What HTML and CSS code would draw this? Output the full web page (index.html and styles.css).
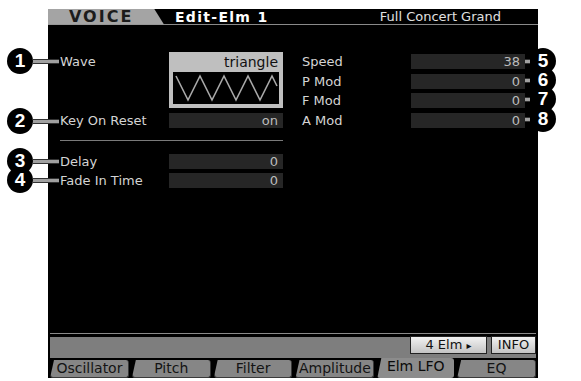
FILE: index.html
```html
<!DOCTYPE html>
<html lang="en">

<head>
    <meta charset="UTF-8">
    <meta name="viewport" content="width=device-width, initial-scale=1.0">
    <title>Voice Edit - Elm LFO</title>

    <link rel="stylesheet" href="styles.css">
</head>

<body>

    <div class="page">

        <!-- LCD screen -->
        <div class="screen">

            <!-- Title bar -->
            <div class="header">
                <div class="mode">VOICE</div>
                <div class="title">Edit-Elm 1</div>
                <div class="voice-name">Full Concert Grand</div>
            </div>

            <!-- Parameters -->
            <div class="content">
                <div class="col col-left">
                    <div class="row row-wave">
                        <span class="label">Wave</span>
                        <div class="wave-box">
                            <div class="wave-name">triangle</div>
                            <div class="wave-graph">
                                <svg viewBox="0 0 106 32" width="106" height="32">
                                    <polyline points="3,4 15,28 27,4 39,28 51,4 63,28 75,4 87,28 99,4 104,14"
                                        fill="none" stroke="#a8a8a8" stroke-width="1.6" />
                                </svg>
                            </div>
                        </div>
                    </div>
                    <div class="row row-key">
                        <span class="label">Key On Reset</span>
                        <div class="value">on</div>
                    </div>
                    <div class="sep"></div>
                    <div class="row row-delay">
                        <span class="label">Delay</span>
                        <div class="value">0</div>
                    </div>
                    <div class="row">
                        <span class="label">Fade In Time</span>
                        <div class="value">0</div>
                    </div>
                </div>

                <div class="col col-right">
                    <div class="row">
                        <span class="label">Speed</span>
                        <div class="value">38</div>
                    </div>
                    <div class="row">
                        <span class="label">P Mod</span>
                        <div class="value">0</div>
                    </div>
                    <div class="row">
                        <span class="label">F Mod</span>
                        <div class="value">0</div>
                    </div>
                    <div class="row">
                        <span class="label">A Mod</span>
                        <div class="value">0</div>
                    </div>
                </div>
            </div>

            <!-- Function buttons and tabs -->
            <div class="footer">
                <div class="band">
                    <div class="btn btn-elm">4 Elm <span class="arrow">&#9656;</span></div>
                    <div class="btn btn-info">INFO</div>
                </div>
                <div class="tabs">
                    <div class="tab">Oscillator</div>
                    <div class="tab">Pitch</div>
                    <div class="tab">Filter</div>
                    <div class="tab">Amplitude</div>
                    <div class="tab active">Elm LFO</div>
                    <div class="tab">EQ</div>
                </div>
            </div>
        </div>

        <!-- Numbered callouts -->
        <div class="callout left" style="top: 48px;"><span class="num">1</span><span class="lead"></span></div>
        <div class="callout left" style="top: 108px;"><span class="num">2</span><span class="lead"></span></div>
        <div class="callout left" style="top: 148px;"><span class="num">3</span><span class="lead"></span></div>
        <div class="callout left" style="top: 167px;"><span class="num">4</span><span class="lead"></span></div>
        <div class="callout right" style="top: 48px;"><span class="lead"></span><span class="num">5</span></div>
        <div class="callout right" style="top: 67px;"><span class="lead"></span><span class="num">6</span></div>
        <div class="callout right" style="top: 86px;"><span class="lead"></span><span class="num">7</span></div>
        <div class="callout right" style="top: 106px;"><span class="lead"></span><span class="num">8</span></div>
    </div>

</body>

</html>
```

FILE: styles.css
```css
* {
    margin: 0;
    padding: 0;
    box-sizing: border-box;
}

body {
    background-color: #ffffff;
    font-family: "DejaVu Sans", sans-serif;
}

.page {
    position: relative;
    width: 581px;
    height: 381px;
    padding: 9px 0 0 48px;
}

/* Screen */
.screen {
    width: 490px;
    height: 369px;
    background-color: #000;
    display: flex;
    flex-direction: column;
}

/* Title bar */
.header {
    height: 16px;
    display: flex;
    align-items: center;
    border-bottom: 1px solid #8a8a8a;
}

.mode {
    width: 116px;
    height: 16px;
    background-color: #a4a4a4;
    color: #1c1c1c;
    font-family: "DejaVu Sans", sans-serif;
    font-weight: bold;
    font-size: 16px;
    line-height: 16px;
    letter-spacing: 2px;
    padding-left: 21px;
    clip-path: polygon(0 0, 106px 0, 116px 100%, 0 100%);
}

.title {
    color: #fff;
    font-weight: bold;
    font-size: 14px;
    letter-spacing: 1.3px;
    margin-left: 11px;
}

.voice-name {
    color: #e0e0e0;
    font-size: 13px;
    margin-left: auto;
    margin-right: 37px;
}

/* Parameters */
.content {
    flex: 1;
    display: flex;
    color: #d4d4d4;
    font-size: 13px;
}

.col {
    display: flex;
    flex-direction: column;
}

.col-left {
    width: 223px;
    margin-left: 12px;
    padding-top: 27px;
}

.col-right {
    width: 223px;
    margin-left: 19px;
    padding-top: 29px;
    gap: 4.5px;
}

.row {
    display: flex;
    align-items: center;
    justify-content: space-between;
    height: 15px;
}

.row-wave {
    height: 56px;
    align-items: flex-start;
}

.row-wave .label {
    margin-top: 2px;
}

.row-key {
    margin-top: 5px;
}

.row-delay {
    margin-top: 13px;
    margin-bottom: 4px;
}

.label {
    line-height: 15px;
}

.value {
    width: 114px;
    height: 15px;
    background-color: #262626;
    color: #bcbcbc;
    text-align: right;
    padding-right: 5px;
    line-height: 15px;
}

.sep {
    height: 1px;
    background-color: #7a7a7a;
    margin-top: 12px;
}

/* Wave display */
.wave-box {
    width: 114px;
    height: 56px;
    background-color: #bfbfbf;
    padding: 0 4px 4px 4px;
    display: flex;
    flex-direction: column;
}

.wave-name {
    height: 20px;
    color: #111;
    font-size: 14px;
    line-height: 20px;
    text-align: right;
    padding-right: 1px;
}

.wave-graph {
    flex: 1;
    background-color: #000;
    display: flex;
    align-items: center;
}

/* Footer */
.footer {
    height: 47px;
    display: flex;
    flex-direction: column;
    padding: 0 2px;
}

.band {
    height: 26px;
    border-top: 1px solid #8a8a8a;
    margin-top: 2px;
    padding-top: 2px;
    display: flex;
    justify-content: flex-end;
    gap: 4px;
    background: linear-gradient(#000 0, #000 3px, #7e7e7e 3px);
}

.btn {
    height: 18px;
    background: linear-gradient(#f2f2f2, #c4c4c4);
    border: 1px solid #222;
    color: #111;
    font-size: 13px;
    line-height: 16px;
    text-align: center;
}

.btn-elm {
    width: 77px;
}

.arrow {
    font-size: 10px;
}

.btn-info {
    width: 45px;
}

.tabs {
    display: flex;
    gap: 3px;
    height: 20px;
}

.tab {
    flex: 1;
    margin-top: 2px;
    background-color: #868686;
    border: 1px solid #3a3a3a;
    border-top: none;
    border-radius: 0 3px 3px 3px;
    color: #141414;
    font-size: 14px;
    line-height: 17px;
    text-align: center;
    clip-path: polygon(4px 0, 100% 0, 100% 100%, 0 100%);
}

.tab.active {
    margin-top: 0;
    background-color: #8c8c8c;
    border: none;
    color: #0a0a0a;
}

/* Callouts */
.callout {
    position: absolute;
    display: flex;
    align-items: center;
}

.callout.left {
    left: 7px;
}

.callout.right {
    left: 525px;
}

.num {
    width: 26px;
    height: 26px;
    border-radius: 50%;
    background-color: #000;
    color: #fff;
    font-family: "Liberation Sans", sans-serif;
    font-weight: bold;
    font-size: 19px;
    line-height: 26px;
    text-align: center;
}

.lead {
    height: 5px;
    background-color: #a0a0a0;
    border-top: 1px solid #333;
    border-bottom: 1px solid #333;
}

.callout.left .lead {
    width: 26px;
}

.callout.right .lead {
    width: 5px;
}
```
